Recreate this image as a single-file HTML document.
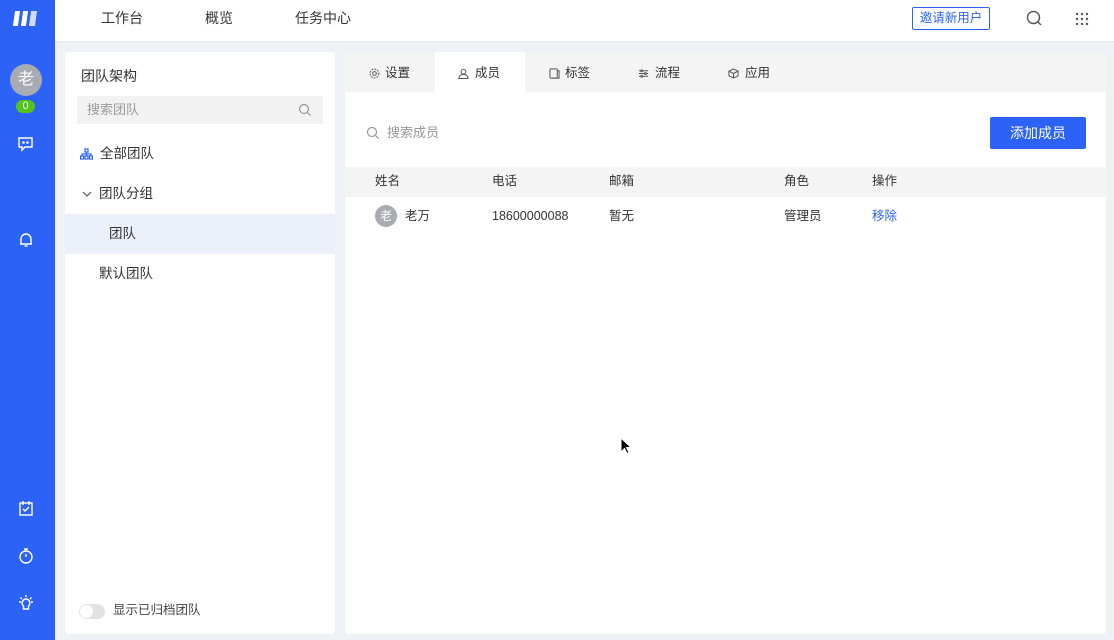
<!DOCTYPE html>
<html><head><meta charset="utf-8"><style>
*{margin:0;padding:0;box-sizing:border-box}
body{width:1114px;height:640px;overflow:hidden;background:#eef1f6;font-family:"Liberation Sans","Noto Sans CJK SC",sans-serif;color:#333;font-size:13px;position:relative;line-height:1.2}
.abs{position:absolute}
.side{left:0;top:0;width:55px;height:640px;background:#2c63f6}
.top{left:55px;top:0;width:1059px;height:42px;background:#fff;border-bottom:1px solid #e6e8ee}
.nav{top:10px;font-size:14px;color:#333}
.panel{background:#fff;border-radius:3px}
svg{position:absolute}
.tab{font-size:12.5px;top:14px}
</style></head><body>
<div class="abs side">
  <div class="abs" style="left:14px;top:11px;width:24px;height:15px">
    <div class="abs" style="left:0;top:0;width:5px;height:15px;background:#fff;transform:skewX(-8deg)"></div>
    <div class="abs" style="left:8px;top:0;width:5px;height:15px;background:#fff;transform:skewX(-8deg)"></div>
    <div class="abs" style="left:16px;top:0;width:6px;height:15px;background:#cfdcff;transform:skewX(-8deg)"></div>
  </div>
  <div class="abs" style="left:10px;top:64px;width:32px;height:32px;border-radius:50%;background:#a9abb3;color:#fff;font-size:16px;text-align:center;line-height:32px">老</div>
  <div class="abs" style="left:16px;top:100px;width:19px;height:13px;border-radius:7px;background:#52c41a;color:#fff;font-size:11px;text-align:center;line-height:13px">0</div>
  <svg style="left:17px;top:136px" width="18" height="16" viewBox="0 0 18 16" fill="none" stroke="#fff" stroke-width="1.4"><path d="M2 2h13v9H8l-3 3v-3H2z"/><circle cx="6.5" cy="6.5" r=".6" fill="#fff"/><circle cx="10.5" cy="6.5" r=".6" fill="#fff"/></svg>
  <svg style="left:18px;top:232px" width="16" height="16" viewBox="0 0 16 16" fill="none" stroke="#fff" stroke-width="1.4"><path d="M3 12V7a5 5 0 0 1 10 0v5H2h12M6.5 14h3"/></svg>
  <svg style="left:18px;top:500px" width="16" height="16" viewBox="0 0 16 16" fill="none" stroke="#fff" stroke-width="1.4"><rect x="2" y="3" width="12" height="12"/><path d="M5 1v4M11 1v4M5 9l2 2 4-4"/></svg>
  <svg style="left:18px;top:547px" width="16" height="17" viewBox="0 0 16 17" fill="none" stroke="#fff" stroke-width="1.4"><circle cx="8" cy="10" r="6"/><path d="M6 2h4M8 2v2M8 7v3"/></svg>
  <svg style="left:17px;top:595px" width="18" height="17" viewBox="0 0 18 17" fill="none" stroke="#fff" stroke-width="1.4"><path d="M9 4a4 4 0 0 0-2.5 7v3h5v-3A4 4 0 0 0 9 4zM9 0v2M2 7h2M14 7h2M3.5 2.5l1.5 1.5M14.5 2.5L13 4"/></svg>
</div>
<div class="abs top">
  <div class="abs nav" style="left:46px">工作台</div>
  <div class="abs nav" style="left:150px">概览</div>
  <div class="abs nav" style="left:240px">任务中心</div>
  <div class="abs" style="left:857px;top:7px;width:78px;height:23px;border:1px solid #2c63f6;border-radius:2px;color:#2c63f6;font-size:12.5px;display:flex;align-items:center;justify-content:center">邀请新用户</div>
  <svg style="left:971px;top:10px" width="17" height="17" viewBox="0 0 17 17" fill="none" stroke="#555" stroke-width="1.4"><circle cx="7.5" cy="7.5" r="6"/><path d="M12 12l3 3"/></svg>
  <svg style="left:1020px;top:12px" width="14" height="14" viewBox="0 0 14 14" fill="#555"><circle cx="2" cy="2" r="1.2"/><circle cx="7" cy="2" r="1.2"/><circle cx="12" cy="2" r="1.2"/><circle cx="2" cy="7" r="1.2"/><circle cx="7" cy="7" r="1.2"/><circle cx="12" cy="7" r="1.2"/><circle cx="2" cy="12" r="1.2"/><circle cx="7" cy="12" r="1.2"/><circle cx="12" cy="12" r="1.2"/></svg>
</div>
<div class="abs panel" style="left:65px;top:52px;width:270px;height:582px">
  <div class="abs" style="left:16px;top:16px;font-size:14px">团队架构</div>
  <div class="abs" style="left:12px;top:44px;width:246px;height:28px;background:#f2f2f2;color:#999;font-size:13px;line-height:28px;padding-left:10px">搜索团队</div>
  <svg style="left:233px;top:51px" width="14" height="14" viewBox="0 0 14 14" fill="none" stroke="#999" stroke-width="1.2"><circle cx="6" cy="6" r="4.5"/><path d="M9.5 9.5l3 3"/></svg>
  <svg style="left:15px;top:96px" width="13" height="12" viewBox="0 0 13 12" fill="none" stroke="#2c63f6" stroke-width="1.2"><rect x="5" y="1" width="3" height="3"/><rect x="0.6" y="8" width="3" height="3"/><rect x="5" y="8" width="3" height="3"/><rect x="9.4" y="8" width="3" height="3"/><path d="M6.5 4v4M2 8V6h9v2"/></svg>
  <div class="abs" style="left:35px;top:94px;font-size:13.5px">全部团队</div>
  <svg style="left:17px;top:138px" width="10" height="8" viewBox="0 0 10 8" fill="none" stroke="#555" stroke-width="1.2"><path d="M1 2l4 4 4-4"/></svg>
  <div class="abs" style="left:34px;top:134px;font-size:13.5px">团队分组</div>
  <div class="abs" style="left:0;top:162px;width:270px;height:40px;background:#ebf0fb"></div>
  <div class="abs" style="left:44px;top:174px;font-size:13.5px">团队</div>
  <div class="abs" style="left:34px;top:214px;font-size:13.5px">默认团队</div>
  <div class="abs" style="left:14px;top:552px;width:26px;height:15px;border-radius:8px;background:#e2e2e2"><div class="abs" style="left:1px;top:1px;width:13px;height:13px;border-radius:50%;background:#fff"></div></div>
  <div class="abs" style="left:48px;top:551px;font-size:12.5px;color:#444">显示已归档团队</div>
</div>
<div class="abs panel" style="left:345px;top:52px;width:761px;height:582px;overflow:hidden">
  <div class="abs" style="left:0;top:0;width:761px;height:40px;background:#f4f4f4"></div>
  <div class="abs" style="left:90px;top:0;width:90px;height:40px;background:#fff"></div>
  <svg style="left:24px;top:16px" width="11" height="11" viewBox="0 0 12 12" fill="none" stroke="#555" stroke-width="1.1"><circle cx="6" cy="6" r="2"/><circle cx="6" cy="6" r="4.8" stroke-dasharray="2 1.2"/></svg>
  <div class="abs tab" style="left:40px">设置</div>
  <svg style="left:113px;top:16px" width="11" height="11" viewBox="0 0 12 12" fill="none" stroke="#555" stroke-width="1.1"><circle cx="6" cy="4" r="2.6"/><path d="M1 11.5c0-3 2.2-4.5 5-4.5s5 1.5 5 4.5z"/></svg>
  <div class="abs tab" style="left:130px">成员</div>
  <svg style="left:204px;top:16px" width="11" height="11" viewBox="0 0 12 12" fill="none" stroke="#555" stroke-width="1.1"><rect x="1" y="1" width="8" height="10" rx="1"/><path d="M9 3h2v8H3"/></svg>
  <div class="abs tab" style="left:220px">标签</div>
  <svg style="left:293px;top:16px" width="11" height="11" viewBox="0 0 12 12" fill="none" stroke="#555" stroke-width="1.1"><path d="M1 3h10M1 6h10M1 9h10"/><circle cx="4" cy="3" r="1" fill="#fff"/><circle cx="8" cy="6" r="1" fill="#fff"/><circle cx="4" cy="9" r="1" fill="#fff"/></svg>
  <div class="abs tab" style="left:310px">流程</div>
  <svg style="left:383px;top:16px" width="11" height="11" viewBox="0 0 12 12" fill="none" stroke="#555" stroke-width="1.1"><path d="M6 1l5 2.5v5L6 11 1 8.5v-5zM1 3.5L6 6l5-2.5M6 6v5"/></svg>
  <div class="abs tab" style="left:400px">应用</div>
  <svg style="left:21px;top:74px" width="14" height="14" viewBox="0 0 14 14" fill="none" stroke="#999" stroke-width="1.2"><circle cx="6" cy="6" r="4.5"/><path d="M9.5 9.5l3 3"/></svg>
  <div class="abs" style="left:42px;top:73px;color:#999;font-size:13px">搜索成员</div>
  <div class="abs" style="left:645px;top:65px;width:96px;height:32px;background:#2c63f6;color:#fff;border-radius:2px;font-size:14px;text-align:center;line-height:32px">添加成员</div>
  <div class="abs" style="left:0;top:115px;width:761px;height:30px;background:#f4f4f4"></div>
  <div class="abs" style="left:30px;top:122px;font-size:12.5px">姓名</div>
  <div class="abs" style="left:147px;top:122px;font-size:12.5px">电话</div>
  <div class="abs" style="left:264px;top:122px;font-size:12.5px">邮箱</div>
  <div class="abs" style="left:439px;top:122px;font-size:12.5px">角色</div>
  <div class="abs" style="left:527px;top:122px;font-size:12.5px">操作</div>
  <div class="abs" style="left:30px;top:153px;width:22px;height:22px;border-radius:50%;background:#a9abb3;color:#fff;font-size:12px;text-align:center;line-height:22px">老</div>
  <div class="abs" style="left:60px;top:157px;font-size:12.5px;line-height:15px">老万</div>
  <div class="abs" style="left:147px;top:157px;font-size:12.5px;line-height:15px">18600000088</div>
  <div class="abs" style="left:264px;top:157px;font-size:12.5px;line-height:15px">暂无</div>
  <div class="abs" style="left:439px;top:157px;font-size:12.5px;line-height:15px">管理员</div>
  <div class="abs" style="left:527px;top:157px;font-size:12.5px;line-height:15px;color:#2c63f6">移除</div>
</div>
<svg style="left:620px;top:437px" width="12" height="18" viewBox="0 0 12 18"><path d="M1 1v14l3.5-3.5 2.5 5 2-1-2.5-5H11z" fill="#000" stroke="#fff" stroke-width="1"/></svg>
</body></html>
